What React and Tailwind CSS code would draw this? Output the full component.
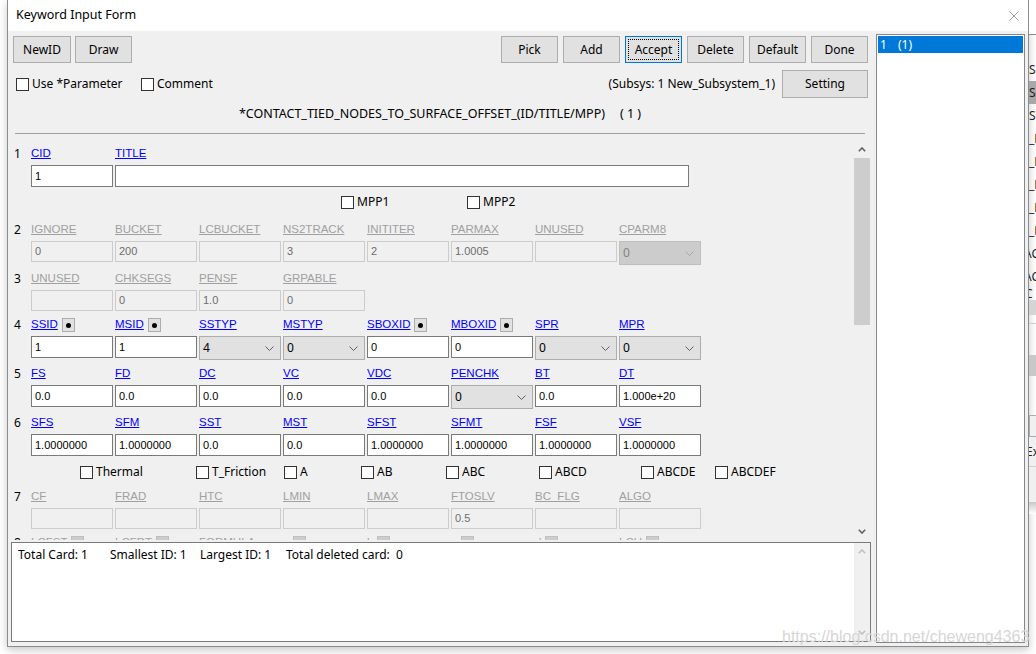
import React from "react";

const ui = "font-['Noto_Sans',sans-serif]";
const ms = "font-['Liberation_Sans',Arial,sans-serif]";

const Chevron = ({ color = "#606060" }) => (
  <svg width="9" height="5" viewBox="0 0 9 5" fill="none">
    <path d="M0.5 0.5L4.5 4.5L8.5 0.5" stroke={color} strokeWidth="1" />
  </svg>
);

const Arrow = ({ up, color = "#606060" }) => (
  <svg width="8" height="5" viewBox="0 0 8 5" fill="none">
    <path d={up ? "M0.8 4.2L4 1L7.2 4.2" : "M0.8 0.8L4 4L7.2 0.8"} stroke={color} strokeWidth="1.6" />
  </svg>
);

const Button = ({ children, className = "w-[57px] h-[27px]", focus }) => (
  <div
    className={`${className} shrink-0 flex items-center justify-center bg-[#e1e1e1] border text-[12px] text-black ${
      focus ? "border-[#0078d7] p-[2px]" : "border-[#adadad]"
    }`}>
    {focus ? (
      <div className="w-full h-full border border-dotted border-black flex items-center justify-center">
        {children}
      </div>
    ) : (
      children
    )}
  </div>
);

const Check = ({ label, className = "" }) => (
  <div className={`flex items-center shrink-0 ${className}`}>
    <span className="w-[13px] h-[13px] border border-[#333333] bg-white shrink-0" />
    <span className="ml-[3px] text-[12px] leading-none">{label}</span>
  </div>
);

const DotBtn = ({ dis }) => (
  <span
    className={`ml-[4px] w-[13px] h-[14px] border flex items-center justify-center shrink-0 ${
      dis ? "bg-[#cccccc] border-[#bfbfbf]" : "bg-[#e1e1e1] border-[#adadad]"
    }`}>
    <span className={`w-[5px] h-[5px] rounded-full ${dis ? "bg-[#8a8a8a]" : "bg-black"}`} />
  </span>
);

const Label = ({ f, dis }) => (
  <div className={`w-[82px] shrink-0 flex items-center text-[11.5px] ${ms}`}>
    <span className={`underline ${dis ? "text-[#a0a0a0]" : "text-[#0000ff]"}`}>{f.l}</span>
    {f.b && <DotBtn dis={dis} />}
  </div>
);

const Field = ({ f, dis }) => {
  const w = f.w || "w-[82px]";
  if (f.s)
    return (
      <div
        className={`${w} shrink-0 h-[24px] flex items-center justify-between pl-[3px] pr-[6px] border text-[12px] ${ui} ${
          dis ? "bg-[#cccccc] border-[#bfbfbf] text-[#838383]" : "bg-[#e1e1e1] border-[#adadad] text-black"
        }`}>
        <span>{f.v}</span>
        <Chevron color={dis ? "#a8a8a8" : "#606060"} />
      </div>
    );
  return (
    <div
      className={`${w} shrink-0 flex items-center pl-[3px] border text-[11px] ${ms} ${
        dis ? "h-[21px] bg-[#f0f0f0] border-[#cccccc] text-[#6d6d6d]" : "h-[22px] bg-white border-[#7a7a7a] text-black"
      }`}>
      {f.v}
    </div>
  );
};

const Row = ({ num, fields, dis, className = "" }) => (
  <div className={`flex ${className}`}>
    <div className={`w-[23px] shrink-0 pl-[6px] h-[16px] flex items-center text-[12px] text-black ${ui}`}>{num}</div>
    <div className="flex flex-col">
      <div className="flex gap-[2px] h-[16px]">
        {fields.map((f, i) => (
          <Label key={i} f={f} dis={dis} />
        ))}
      </div>
      <div className="flex items-start gap-[2px] mt-[3px]">
        {fields.map((f, i) => (
          <Field key={i} f={f} dis={dis} />
        ))}
      </div>
    </div>
  </div>
);

const rows = {
  r1: [{ l: "CID", v: "1" }, { l: "TITLE", v: "", w: "w-[574px]" }],
  r2: [
    { l: "IGNORE", v: "0" },
    { l: "BUCKET", v: "200" },
    { l: "LCBUCKET", v: "" },
    { l: "NS2TRACK", v: "3" },
    { l: "INITITER", v: "2" },
    { l: "PARMAX", v: "1.0005" },
    { l: "UNUSED", v: "" },
    { l: "CPARM8", v: "0", s: true },
  ],
  r3: [
    { l: "UNUSED", v: "" },
    { l: "CHKSEGS", v: "0" },
    { l: "PENSF", v: "1.0" },
    { l: "GRPABLE", v: "0" },
  ],
  r4: [
    { l: "SSID", v: "1", b: true },
    { l: "MSID", v: "1", b: true },
    { l: "SSTYP", v: "4", s: true },
    { l: "MSTYP", v: "0", s: true },
    { l: "SBOXID", v: "0", b: true },
    { l: "MBOXID", v: "0", b: true },
    { l: "SPR", v: "0", s: true },
    { l: "MPR", v: "0", s: true },
  ],
  r5: [
    { l: "FS", v: "0.0" },
    { l: "FD", v: "0.0" },
    { l: "DC", v: "0.0" },
    { l: "VC", v: "0.0" },
    { l: "VDC", v: "0.0" },
    { l: "PENCHK", v: "0", s: true },
    { l: "BT", v: "0.0" },
    { l: "DT", v: "1.000e+20" },
  ],
  r6: [
    { l: "SFS", v: "1.0000000" },
    { l: "SFM", v: "1.0000000" },
    { l: "SST", v: "0.0" },
    { l: "MST", v: "0.0" },
    { l: "SFST", v: "1.0000000" },
    { l: "SFMT", v: "1.0000000" },
    { l: "FSF", v: "1.0000000" },
    { l: "VSF", v: "1.0000000" },
  ],
  r7: [
    { l: "CF", v: "" },
    { l: "FRAD", v: "" },
    { l: "HTC", v: "" },
    { l: "LMIN", v: "" },
    { l: "LMAX", v: "" },
    { l: "FTOSLV", v: "0.5" },
    { l: "BC_FLG", v: "" },
    { l: "ALGO", v: "" },
  ],
  r8: [
    { l: "LCFST", v: "", b: true },
    { l: "LCFDT", v: "", b: true },
    { l: "FORMULA", v: "" },
    { l: "a", v: "", b: true },
    { l: "b", v: "", b: true },
    { l: "c", v: "", b: true },
    { l: "d", v: "", b: true },
    { l: "LCH", v: "", b: true },
  ],
};

const options = [
  ["Thermal", "w-[116px]"],
  ["T_Friction", "w-[88px]"],
  ["A", "w-[77px]"],
  ["AB", "w-[85px]"],
  ["ABC", "w-[93px]"],
  ["ABCD", "w-[102px]"],
  ["ABCDE", "w-[74px]"],
  ["ABCDEF", "w-[80px]"],
];

const stripItems = [
  { t: "S" },
  { t: "S", hl: true },
  { t: "S" },
  { t: "_E" },
  { t: "_E" },
  { t: "_E" },
  { t: "_E" },
  { t: "_E" },
  { t: "AC", shift: true },
  { t: "AC", shift: true },
];

export default function App() {
  return (
    <div className={`w-[1036px] h-[654px] bg-white relative overflow-hidden flex text-black ${ui}`}>
      <div className="w-[7px] shrink-0" />

      {/* Dialog window */}
      <div className="w-[1022px] h-[647px] shrink-0 flex flex-col border-l border-r border-b border-[#8c8c8c] shadow-[0_3px_8px_rgba(0,0,0,0.22)]">
        {/* Title bar */}
        <div className="h-[31px] bg-white flex items-center justify-between pl-[8px] pr-[9px]">
          <span className="text-[12.5px]">Keyword Input Form</span>
          <svg width="10" height="10" viewBox="0 0 10 10">
            <path d="M0.5 0.5L9.5 9.5M9.5 0.5L0.5 9.5" stroke="#9a9a9a" strokeWidth="1" />
          </svg>
        </div>

        <div className="flex-1 flex bg-[#f0f0f0]">
          {/* Main column */}
          <div className="w-[864px] shrink-0 flex flex-col">
            {/* Toolbar */}
            <div className="mt-[5px] h-[27px] flex justify-between pl-[5px] pr-[4px]">
              <div className="flex gap-[4px]">
                <Button className="w-[58px] h-[27px]">NewID</Button>
                <Button>Draw</Button>
              </div>
              <div className="flex gap-[5px]">
                <Button>Pick</Button>
                <Button>Add</Button>
                <Button focus>Accept</Button>
                <Button>Delete</Button>
                <Button>Default</Button>
                <Button>Done</Button>
              </div>
            </div>

            {/* Options row */}
            <div className="mt-[7px] h-[28px] flex items-center justify-between pl-[8px] pr-[4px]">
              <div className="flex items-center">
                <Check label="Use *Parameter" className="w-[125px]" />
                <Check label="Comment" />
              </div>
              <div className="flex items-center gap-[7px]">
                <span className="text-[12px]">(Subsys: 1 New_Subsystem_1)</span>
                <Button className="w-[86px] h-[28px]">Setting</Button>
              </div>
            </div>

            {/* Keyword title */}
            <div className="mt-[6px] h-[20px] flex items-center justify-center text-[12.5px]">
              <span>*CONTACT_TIED_NODES_TO_SURFACE_OFFSET_(ID/TITLE/MPP)</span>
              <span className="ml-[15px]">( 1 )</span>
            </div>

            <div className="mt-[9px] mx-[7px] h-px bg-[#a0a0a0]" />

            {/* Card form */}
            <div className="mt-[6px] h-[400px] flex">
              <div className="flex-1 overflow-hidden pt-[6px]">
                <Row num="1" fields={rows.r1} />
                <div className="mt-[3px] h-[24px] flex items-center pl-[333px]">
                  <Check label="MPP1" className="w-[126px]" />
                  <Check label="MPP2" />
                </div>
                <Row num="2" fields={rows.r2} dis className="mt-[8px]" />
                <Row num="3" fields={rows.r3} dis className="mt-[6px]" />
                <Row num="4" fields={rows.r4} className="mt-[6px]" />
                <Row num="5" fields={rows.r5} className="mt-[6px]" />
                <Row num="6" fields={rows.r6} className="mt-[6px]" />
                <div className="mt-[4px] h-[24px] flex items-center pl-[72px]">
                  {options.map(([l, w]) => (
                    <Check key={l} label={l} className={w} />
                  ))}
                </div>
                <Row num="7" fields={rows.r7} dis className="mt-[5px]" />
                <Row num="8" fields={rows.r8} dis className="mt-[6px]" />
              </div>
              {/* Scrollbar */}
              <div className="w-[16px] mr-[2px] flex flex-col items-center">
                <div className="h-[18px] flex items-center justify-center">
                  <Arrow up />
                </div>
                <div className="w-full h-[167px] bg-[#cdcdcd]" />
                <div className="flex-1" />
                <div className="h-[17px] flex items-center justify-center">
                  <Arrow />
                </div>
              </div>
            </div>

            {/* Summary box */}
            <div className="mt-[2px] ml-[3px] mr-[1px] h-[100px] flex border border-[#7a7a7a] bg-white">
              <div className="flex-1 pl-[6px] pt-[3px] flex text-[12px] h-[20px] items-center">
                <span className="w-[92px]">Total Card: 1</span>
                <span className="w-[90px]">Smallest ID: 1</span>
                <span className="w-[86px]">Largest ID: 1</span>
                <span>Total deleted card:&nbsp; 0</span>
              </div>
              <div className="w-[16px] bg-[#f0f0f0] flex flex-col justify-between items-center py-[6px]">
                <Arrow up color="#c0c0c0" />
                <Arrow color="#c0c0c0" />
              </div>
            </div>
          </div>

          {/* Card list */}
          <div className="ml-[4px] mt-[3px] mb-[3px] w-[149px] border border-[#828790] bg-white p-[1px]">
            <div className="h-[17px] bg-[#0078d7] text-white text-[12px] flex items-center pl-[2px]">
              <span className="w-[18px]">1</span>
              <span>(1)</span>
            </div>
          </div>
        </div>
      </div>

      {/* Background application edge */}
      <div className="w-[7px] shrink-0 flex flex-col overflow-hidden text-[12px] text-[#222]">
        <div className="h-[34px] bg-white" />
        <div className="h-px bg-[#8a8a8a]" />
        <div className="h-[23px]" />
        {stripItems.map((it, i) => (
          <div key={i} className={`h-[23px] flex items-center whitespace-nowrap ${it.hl ? "bg-[#a8a8a8]" : ""}`}>
            <span className={it.shift ? "-ml-[5px]" : ""}>{it.t}</span>
          </div>
        ))}
        <div className="h-[12px] flex items-center">
          <span className="-ml-[4px]">C</span>
        </div>
        <div className="h-[15px] bg-[#d4d4d4]" />
        <div className="h-[8px]" />
        <div className="h-px bg-[#d0d0d0]" />
        <div className="h-[31px]" />
        <div className="h-[21px] bg-[#c8c8c8]" />
        <div className="h-[39px]" />
        <div className="h-[22px] border-y border-l border-[#adadad] bg-[#f0f0f0]" />
        <div className="h-[30px] bg-[#f0f0f0] border-b border-[#d0d0d0] flex items-center whitespace-nowrap">
          <span className="-ml-[3px]">Ex</span>
        </div>
        <div className="h-[35px] bg-[#f0f0f0]" />
        <div className="h-[12px] bg-gradient-to-b from-[#c8c8c8] to-white" />
      </div>

      {/* Watermark */}
      <span className="absolute left-[782px] top-[625px] text-[16px] text-[#d6d6d6] font-['Liberation_Sans',Arial,sans-serif] whitespace-nowrap">
        https://blog.csdn.net/cheweng4363
      </span>
    </div>
  );
}
